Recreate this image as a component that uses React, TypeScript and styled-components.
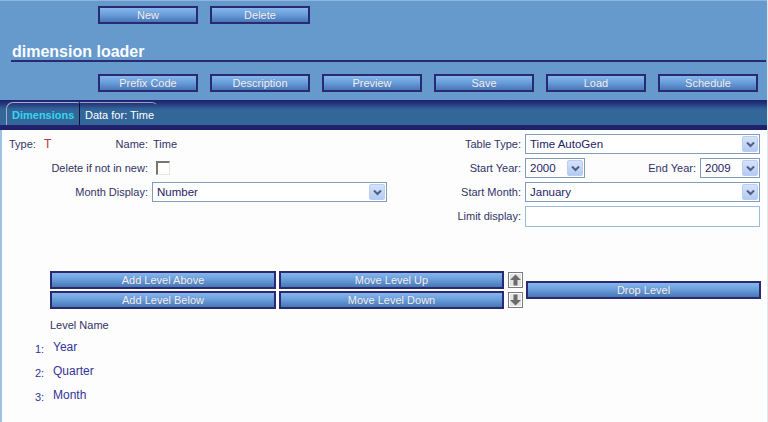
import React from "react";
import styled, { createGlobalStyle } from "styled-components";

const Global = createGlobalStyle`
  html, body { margin: 0; padding: 0; background: #fcfdfc; }
  body { font-family: "Liberation Sans", Arial, sans-serif; width: 768px; height: 422px; overflow: hidden; }
  * { box-sizing: border-box; }
`;

const Page = styled.div`
  width: 768px;
  height: 422px;
  display: flex;
  flex-direction: column;
  background: #fcfdfc;
  border-right: 1px solid #dfe7ef;
`;

const Header = styled.div`
  background: #6699cc;
  border-top: 1px solid #8fb5dc;
  height: 100px;
  display: flex;
  flex-direction: column;
`;

const ButtonRow = styled.div<{ $top: number }>`
  display: flex;
  gap: 12px;
  padding-left: 98px;
  margin-top: ${(p) => p.$top}px;
`;

const Btn = styled.button<{ $w?: number }>`
  width: ${(p) => p.$w ?? 100}px;
  height: 18px;
  padding: 0;
  border: 2px solid #292a72;
  background: linear-gradient(#86b6ec, #6b9fdc 45%, #4877b6);
  color: #eef2f8;
  font-family: "Liberation Sans", Arial, sans-serif;
  font-size: 11px;
  line-height: 14px;
  text-shadow: 0 0 1px #6a7fa0;
  cursor: pointer;
`;

const Title = styled.h1`
  margin: 18px 1px 0 11px;
  padding-left: 1px;
  height: 20px;
  font-size: 16px;
  line-height: 19px;
  font-weight: bold;
  color: #fbfcff;
  border-bottom: 2px solid #2a2a72;
`;

const TabBar = styled.div`
  height: 30px;
  background: linear-gradient(#1e2170 0px, #23307a 3px, #2f5c93 8px, #336699 10px, #336699 25px, #22226e 25px, #1e2068 30px);
  display: flex;
  align-items: flex-end;
  padding-left: 6px;
  padding-bottom: 5px;
`;

const Tab = styled.div<{ $active?: boolean }>`
  height: 23px;
  padding: 4px 0 0 5px;
  width: ${(p) => (p.$active ? 74 : 78)}px;
  font-size: 11px;
  line-height: 16px;
  font-weight: ${(p) => (p.$active ? "bold" : "normal")};
  color: ${(p) => (p.$active ? "#33d6f0" : "#ffffff")};
  border-top: 1px solid ${(p) => (p.$active ? "#a9adc2" : "#9a9eb8")};
  border-left: ${(p) => (p.$active ? "1px solid #a9adc2" : "none")};
  border-right: 1px solid ${(p) => (p.$active ? "#0d0f2c" : "transparent")};
  border-top-left-radius: ${(p) => (p.$active ? 7 : 0)}px;
  border-top-right-radius: ${(p) => (p.$active ? 3 : 6)}px;
  white-space: nowrap;
`;

const Content = styled.div`
  flex: 1;
  border-left: 2px solid #9cc2e6;
  display: flex;
  flex-direction: column;
`;

const Form = styled.div`
  display: grid;
  grid-template-columns: 146px 235px 1fr 235px;
  grid-auto-rows: 20px;
  column-gap: 4px;
  row-gap: 4px;
  margin-top: 4px;
  padding-right: 7px;
  color: #333366;
  font-size: 11px;
`;

const TypeCell = styled.div`
  display: flex;
  align-items: center;
  justify-content: space-between;
  padding-left: 7px;
`;

const TypeVal = styled.span`
  color: #b03048;
  margin-left: 8px;
  font-size: 12px;
`;

const Label = styled.div<{ $col?: number }>`
  grid-column: ${(p) => p.$col ?? "auto"};
  display: flex;
  align-items: center;
  justify-content: flex-end;
  white-space: nowrap;
`;

const Value = styled.div`
  display: flex;
  align-items: center;
  padding-left: 1px;
`;

const CheckBox = styled.div`
  width: 14px;
  height: 14px;
  margin-left: 3px;
  border-top: 2px solid #777770;
  border-left: 2px solid #777770;
  border-right: 1px solid #e6e6de;
  border-bottom: 1px solid #e6e6de;
  background: #fff;
`;

const SelectBox = styled.div<{ $w?: number }>`
  width: ${(p) => (p.$w ? `${p.$w}px` : "100%")};
  height: 20px;
  border: 1px solid #7f9db9;
  background: #fff;
  display: flex;
  align-items: center;
  justify-content: space-between;
  padding-left: 4px;
  padding-right: 1px;
  font-size: 11.5px;
  color: #232366;
`;

const ArrowBtn = styled.div`
  width: 16px;
  height: 16px;
  border-radius: 2px;
  border: 1px solid #bccdf0;
  background: linear-gradient(#d5e2fa, #b5cbf3);
  display: flex;
  align-items: center;
  justify-content: center;
`;

const Chevron = () => (
  <svg width="9" height="7" viewBox="0 0 9 7">
    <path d="M1 1.5 L4.5 5 L8 1.5" fill="none" stroke="#4d6185" strokeWidth="2" />
  </svg>
);

const Select = ({ value, w }: { value: string; w?: number }) => (
  <SelectBox $w={w}>
    <span>{value}</span>
    <ArrowBtn>
      <Chevron />
    </ArrowBtn>
  </SelectBox>
);

const YearCell = styled.div`
  display: flex;
  align-items: center;
  gap: 4px;
`;

const Spacer = styled.div`
  flex: 1;
  text-align: right;
  white-space: nowrap;
`;

const TextInput = styled.div`
  height: 21px;
  border: 1px solid #9bbcd8;
  background: #fff;
`;

const LevelTools = styled.div`
  display: flex;
  align-items: center;
  margin-top: 45px;
  padding-left: 48px;
`;

const LevelGrid = styled.div`
  display: grid;
  grid-template-columns: 226px 225px;
  column-gap: 3px;
  row-gap: 2px;
`;

const ArrowCol = styled.div`
  display: flex;
  flex-direction: column;
  gap: 4px;
  margin-left: 4px;
  margin-right: 3px;
`;

const IconBtn = styled.div`
  width: 15px;
  height: 16px;
  border: 1px solid #7c7c7c;
  background: #fff;
  padding: 1px;
  display: flex;
`;

const IconInner = styled.div`
  flex: 1;
  background: #e4e4e4;
  display: flex;
  align-items: center;
  justify-content: center;
`;

const UpArrow = ({ down }: { down?: boolean }) => (
  <svg width="11" height="12" viewBox="0 0 11 12" style={down ? { transform: "rotate(180deg)" } : undefined}>
    <path d="M5.5 0.5 L11 6 L7.5 6 L7.5 11.5 L3.5 11.5 L3.5 6 L0 6 Z" fill="#6b6b6b" />
  </svg>
);

const Levels = styled.div`
  padding-left: 33px;
  margin-top: 9px;
  color: #333399;
  font-size: 12px;
`;

const LevelHeader = styled.div`
  padding-left: 15px;
  color: #333366;
  font-size: 11px;
  height: 14px;
  line-height: 14px;
  margin-bottom: 8px;
`;

const LevelRow = styled.div`
  display: flex;
  align-items: flex-start;
  height: 24px;
`;

const LevelNum = styled.span`
  width: 18px;
  font-size: 11px;
  padding-top: 3px;
  color: #333399;
`;

export default function App() {
  return (
    <Page>
      <Global />
      <Header>
        <ButtonRow $top={5}>
          <Btn>New</Btn>
          <Btn>Delete</Btn>
        </ButtonRow>
        <Title>dimension loader</Title>
        <ButtonRow $top={12}>
          <Btn>Prefix Code</Btn>
          <Btn>Description</Btn>
          <Btn>Preview</Btn>
          <Btn>Save</Btn>
          <Btn>Load</Btn>
          <Btn>Schedule</Btn>
        </ButtonRow>
      </Header>
      <TabBar>
        <Tab $active>Dimensions</Tab>
        <Tab>Data for: Time</Tab>
      </TabBar>
      <Content>
        <Form>
          <TypeCell>
            <span>
              Type:<TypeVal>T</TypeVal>
            </span>
            <span>Name:</span>
          </TypeCell>
          <Value>Time</Value>
          <Label>Table Type:</Label>
          <Select value="Time AutoGen" />

          <Label>Delete if not in new:</Label>
          <Value>
            <CheckBox />
          </Value>
          <Label>Start Year:</Label>
          <YearCell>
            <Select value="2000" w={60} />
            <Spacer>End Year:</Spacer>
            <Select value="2009" w={60} />
          </YearCell>

          <Label>Month Display:</Label>
          <Select value="Number" />
          <Label>Start Month:</Label>
          <Select value="January" />

          <Label $col={3}>Limit display:</Label>
          <TextInput />
        </Form>

        <LevelTools>
          <LevelGrid>
            <Btn $w={226}>Add Level Above</Btn>
            <Btn $w={225}>Move Level Up</Btn>
            <Btn $w={226}>Add Level Below</Btn>
            <Btn $w={225}>Move Level Down</Btn>
          </LevelGrid>
          <ArrowCol>
            <IconBtn>
              <IconInner>
                <UpArrow />
              </IconInner>
            </IconBtn>
            <IconBtn>
              <IconInner>
                <UpArrow down />
              </IconInner>
            </IconBtn>
          </ArrowCol>
          <Btn $w={235}>Drop Level</Btn>
        </LevelTools>

        <Levels>
          <LevelHeader>Level Name</LevelHeader>
          <LevelRow>
            <LevelNum>1:</LevelNum>Year
          </LevelRow>
          <LevelRow>
            <LevelNum>2:</LevelNum>Quarter
          </LevelRow>
          <LevelRow>
            <LevelNum>3:</LevelNum>Month
          </LevelRow>
        </Levels>
      </Content>
    </Page>
  );
}
